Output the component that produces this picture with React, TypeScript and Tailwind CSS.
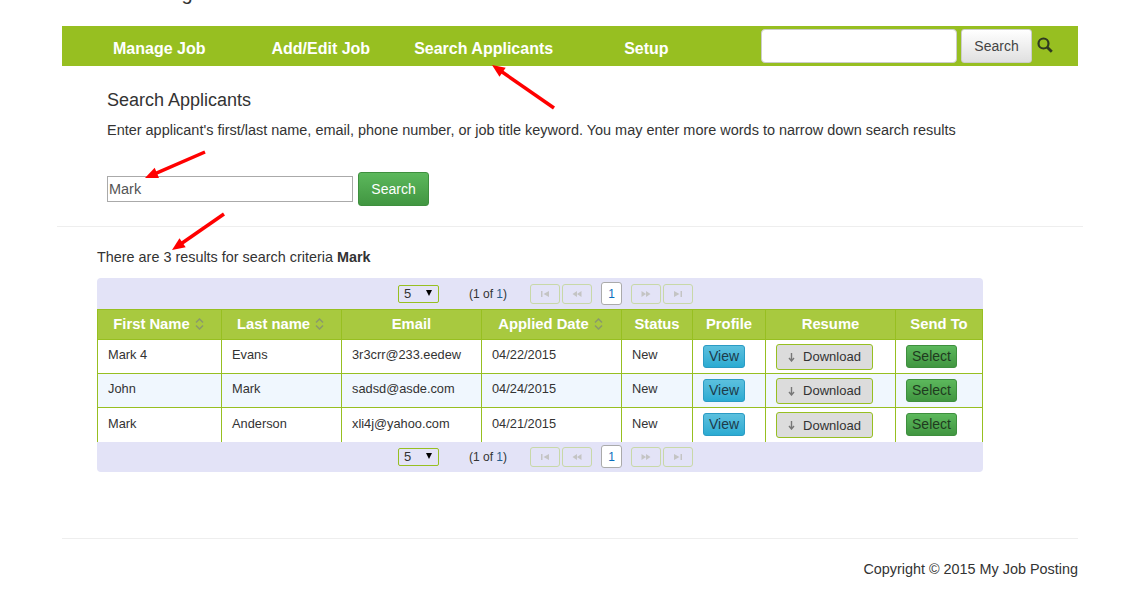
import { useState } from 'react'

const rows = [
  { first: 'Mark 4', last: 'Evans', email: '3r3crr@233.eedew', date: '04/22/2015' },
  { first: 'John', last: 'Mark', email: 'sadsd@asde.com', date: '04/24/2015' },
  { first: 'Mark', last: 'Anderson', email: 'xli4j@yahoo.com', date: '04/21/2015' },
]

function SortIcon() {
  return (
    <svg className="ml-[5px] inline-block align-[-1px]" width="9" height="12" viewBox="0 0 9 12" fill="none" stroke="#8a9a6a" strokeWidth="1.5">
      <path d="M1 4.5 4.5 1 8 4.5M1 7.5 4.5 11 8 7.5" />
    </svg>
  )
}

function PagerButton({ d }: { d: string }) {
  return (
    <span className="flex h-[20px] w-[30px] items-center justify-center rounded-[3px] border border-[#c8d8a8]">
      <svg width="12" height="8" viewBox="0 0 12 8" fill="#c4c4c4">
        <path d={d} />
      </svg>
    </span>
  )
}

function Paginator({ className }: { className: string }) {
  return (
    <div className={`flex items-center pl-[301px] text-[12px] text-[#333] ${className}`}>
      <span className="relative flex h-[18px] w-[41px] items-center rounded-[2px] border border-[#97bf21] bg-[#e3e3f7] pl-[5px] text-[13px]">
        5
        <span className="absolute right-[6px] top-[4px] h-0 w-0 border-x-[3.5px] border-t-[6px] border-x-transparent border-t-black" />
      </span>
      <span className="ml-[30px] w-[61px]">
        (1 of <span className="text-[#1f5f8f]">1</span>)
      </span>
      <div className="flex gap-[2px]">
        <PagerButton d="M2 1h1.5v6H2zM10 1v6L4.5 4z" />
        <PagerButton d="M6 1v6L1.5 4zM10.5 1v6L6 4z" />
      </div>
      <span className="mx-[9px] flex h-[23px] w-[21px] items-center justify-center rounded-[3px] border border-[#aaa] bg-white text-[#0a6ebd]">
        1
      </span>
      <div className="flex gap-[2px]">
        <PagerButton d="M1.5 1v6L6 4zM6 1v6l4.5-3z" />
        <PagerButton d="M2 1v6l5.5-3zM8.5 1H10v6H8.5z" />
      </div>
    </div>
  )
}

function Arrow({ x1, y1, x2, y2 }: { x1: number; y1: number; x2: number; y2: number }) {
  const a = Math.atan2(y2 - y1, x2 - x1)
  const p = (r: number, t: number) => `${x2 - r * Math.cos(a + t)},${y2 - r * Math.sin(a + t)}`
  return (
    <g>
      <line x1={x1} y1={y1} x2={x2 - 8 * Math.cos(a)} y2={y2 - 8 * Math.sin(a)} stroke="#f00" strokeWidth="3.5" />
      <polygon points={`${x2},${y2} ${p(14, 0.4)} ${p(14, -0.4)}`} fill="#f00" />
    </g>
  )
}

export default function App() {
  const [query, setQuery] = useState('Mark')

  return (
    <div className="relative h-[598px] w-[1140px] overflow-hidden bg-white font-['Liberation_Sans',Arial,sans-serif] text-[#333]">
      <header className="mx-[62px] h-[26px] overflow-hidden">
        <div className="-mt-[19px] pl-[26px] text-[20px] leading-[24px]">Job Posting</div>
      </header>

      <nav className="mx-[62px] flex h-[40px] items-center bg-[#97bf21] text-[16px] font-bold text-white">
        <a className="ml-[51px] mt-[5px]">Manage Job</a>
        <a className="ml-[66px] mt-[5px]">Add/Edit Job</a>
        <a className="ml-[44px] mt-[5px]">Search Applicants</a>
        <a className="ml-[71px] mt-[5px]">Setup</a>
        <div className="ml-auto mr-[25px] flex items-start">
          <input className="h-[34px] w-[196px] rounded-[4px] border border-[#ccc] bg-white" />
          <button className="ml-[4px] h-[34px] w-[71px] rounded-[3px] border border-[#ccc] bg-gradient-to-b from-white to-[#e0e0e0] text-[14px] font-normal text-[#444]">
            Search
          </button>
          <svg className="ml-[5px] mt-[8px]" width="16" height="16" viewBox="0 0 16 16" fill="none" stroke="#2f3a20" strokeWidth="2.2">
            <circle cx="6.5" cy="6.5" r="5" />
            <path d="m10.2 10.2 4.6 4.6" strokeWidth="2.8" />
          </svg>
        </div>
      </nav>

      <section className="mx-[57px] h-[161px] border-b border-[#eee] px-[50px] pt-[24px]">
        <h2 className="text-[18px] leading-[20px]">Search Applicants</h2>
        <p className="mt-[10px] text-[14.46px] leading-[20px]">
          Enter applicant's first/last name, email, phone number, or job title keyword. You may enter more words to narrow down search results
        </p>
        <div className="mt-[32px] flex items-start">
          <input
            value={query}
            onChange={(e) => setQuery(e.target.value)}
            className="mt-[4px] h-[26px] w-[246px] border border-[#aaa] px-[1px] text-[14.46px] text-[#555]"
          />
          <button className="ml-[5px] h-[34px] w-[71px] rounded-[3px] border border-[#3e8f3e] bg-gradient-to-b from-[#5cb85c] to-[#419641] text-[14px] text-white">
            Search
          </button>
        </div>
      </section>

      <main className="mx-[97px] w-[886px]">
        <p className="mt-[20px] text-[14.4px] leading-[20px]">
          There are 3 results for search criteria <strong>Mark</strong>
        </p>

        <div className="mt-[11px] overflow-hidden rounded-[4px] bg-[#e3e3f7]">
          <Paginator className="h-[31px]" />
          <table className="w-[885px] table-fixed border-collapse text-[12.8px] [&_tbody_tr:last-child_td]:border-b-0">
            <colgroup>
              <col className="w-[124px]" />
              <col className="w-[120px]" />
              <col className="w-[140px]" />
              <col className="w-[140px]" />
              <col className="w-[71px]" />
              <col className="w-[73px]" />
              <col className="w-[130px]" />
              <col className="w-[87px]" />
            </colgroup>
            <thead>
              <tr className="h-[30px] bg-[#a8c93f] text-[14.8px] text-white">
                <th className="border border-[#97bf21] pr-[2px] font-bold">First Name<SortIcon /></th>
                <th className="border border-[#97bf21] pr-[2px] font-bold">Last name<SortIcon /></th>
                <th className="border border-[#97bf21] font-bold">Email</th>
                <th className="border border-[#97bf21] pr-[2px] font-bold">Applied Date<SortIcon /></th>
                <th className="border border-[#97bf21] font-bold">Status</th>
                <th className="border border-[#97bf21] font-bold">Profile</th>
                <th className="border border-[#97bf21] font-bold">Resume</th>
                <th className="border border-[#97bf21] font-bold">Send To</th>
              </tr>
            </thead>
            <tbody>
              {rows.map((row, i) => (
                <tr key={row.email} className={`h-[34px] ${i % 2 ? 'bg-[#f0f7fe]' : 'bg-white'}`}>
                  <td className="border-x border-b border-[#97bf21] pb-[3px] pl-[10px]">{row.first}</td>
                  <td className="border-x border-b border-[#97bf21] pb-[3px] pl-[10px]">{row.last}</td>
                  <td className="border-x border-b border-[#97bf21] pb-[3px] pl-[10px]">{row.email}</td>
                  <td className="border-x border-b border-[#97bf21] pb-[3px] pl-[10px]">{row.date}</td>
                  <td className="border-x border-b border-[#97bf21] pb-[3px] pl-[10px]">New</td>
                  <td className="border-x border-b border-[#97bf21] pl-[10px]">
                    <button className="flex h-[23px] w-[42px] items-center justify-center rounded-[3px] border border-[#2b9bc4] bg-gradient-to-b from-[#5bc0de] to-[#2aabd2] text-[14px] text-[#1d3b4a]">
                      View
                    </button>
                  </td>
                  <td className="border-x border-b border-[#97bf21] pl-[10px]">
                    <button className="flex h-[26px] w-[97px] items-center justify-center rounded-[3px] border border-[#97bf21] bg-[#dcdcdc] pt-[1px] text-[13px] text-[#333]">
                      <svg className="mr-[8px]" width="7" height="9" viewBox="0 0 7 9" fill="none" stroke="#777" strokeWidth="1.4">
                        <path d="M3.5 0v7M1 5l2.5 3L6 5" />
                      </svg>
                      Download
                    </button>
                  </td>
                  <td className="border-x border-b border-[#97bf21] pl-[10px]">
                    <button className="flex h-[23px] w-[51px] items-center justify-center rounded-[3px] border border-[#3e8f3e] bg-gradient-to-b from-[#5cb85c] to-[#419641] text-[14px] text-[#1f3b1f]">
                      Select
                    </button>
                  </td>
                </tr>
              ))}
            </tbody>
          </table>
          <Paginator className="h-[30px]" />
        </div>
      </main>

      <footer className="mx-[62px] mt-[66px] border-t border-[#eee] pt-[20px] text-right text-[14.4px] leading-[20px]">
        Copyright © 2015 My Job Posting
      </footer>

      {/* red annotation arrows drawn over the page */}
      <svg className="pointer-events-none absolute left-0 top-0" width="1140" height="598">
        <Arrow x1={554} y1={108} x2={492} y2={65} />
        <Arrow x1={205} y1={152} x2={145} y2={178} />
        <Arrow x1={224} y1={214} x2={172} y2={250} />
      </svg>
    </div>
  )
}
